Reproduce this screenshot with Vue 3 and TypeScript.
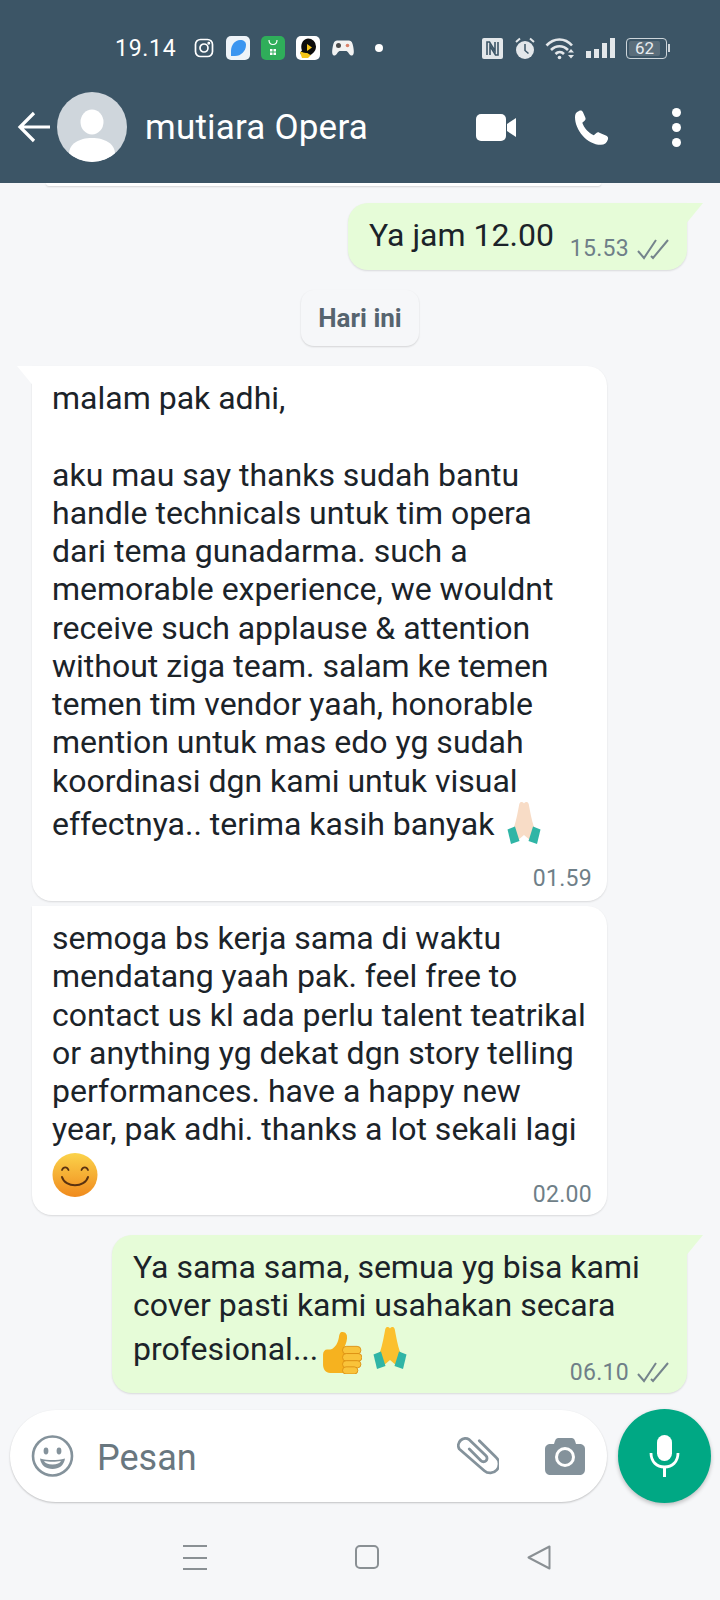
<script setup lang="ts">
const firstMessage = [
  'malam pak adhi,',
  '\u00a0',
  'aku mau say thanks sudah bantu',
  'handle technicals untuk tim opera',
  'dari tema gunadarma. such a',
  'memorable experience, we wouldnt',
  'receive such applause & attention',
  'without ziga team. salam ke temen',
  'temen tim vendor yaah, honorable',
  'mention untuk mas edo yg sudah',
  'koordinasi dgn kami untuk visual',
]
const secondMessage = [
  'semoga bs kerja sama di waktu',
  'mendatang yaah pak. feel free to',
  'contact us kl ada perlu talent teatrikal',
  'or anything yg dekat dgn story telling',
  'performances. have a happy new',
  'year, pak adhi. thanks a lot sekali lagi',
]
</script>

<template>
  <div class="phone">
    <svg width="0" height="0" class="defs">
      <defs>
        <symbol id="ticks" viewBox="0 0 32 22">
          <path d="M1 13l6 7L19 2M14 18l2 2L31 2" fill="none" stroke="currentColor" stroke-width="2" />
        </symbol>
        <symbol id="hands" viewBox="0 0 34 44">
          <g id="hand">
            <path d="M17 3.500C15.800 1.400 13 1.400 12.300 4 11 11 9.400 20 7.200 26.500L4 30l6 11 7-6z" fill="currentColor" />
            <path d="M.5 29.500l7.500-3 4.500 14.500L4 44z" fill="#2fb5a6" />
          </g>
          <use href="#hand" transform="matrix(-1 0 0 1 34 0)" />
        </symbol>
      </defs>
    </svg>

    <header class="top">
      <div class="status">
        <span class="clock">19.14</span>
        <svg class="st insta" width="20" height="20" viewBox="0 0 20 20" fill="none" stroke="#fff" stroke-width="1.700">
          <rect x="1.500" y="1.500" width="17" height="17" rx="5" />
          <circle cx="10" cy="10" r="4" />
          <circle cx="14.800" cy="5.200" r=".6" fill="#fff" />
        </svg>
        <svg class="st" width="24" height="24" viewBox="0 0 24 24">
          <rect width="24" height="24" rx="5" fill="#eef3f8" />
          <path d="M14 4c4 0 6 2 6 5 0 6-5 11-11 11H5v-5C5 9 9 4 14 4z" fill="#3b95f0" />
        </svg>
        <svg class="st" width="24" height="24" viewBox="0 0 24 24">
          <rect width="24" height="24" rx="5" fill="#2fae5a" />
          <path d="M8 4c0 6 8 6 8 0" fill="none" stroke="#fff" stroke-width="1.200" />
          <path d="M9 13h2.500v2.500H9zM12.500 13H15v2.500h-2.500zM9 16.500h2.500V19H9zM12.500 16.500H15V19h-2.500z" fill="#fff" />
        </svg>
        <svg class="st" width="24" height="24" viewBox="0 0 24 24">
          <rect width="24" height="24" rx="5" fill="#fff" />
          <path d="M12 2.500a8 8 0 0 1 8 8c0 5-4 8-7 9-2.500.8-4-1-6.500-.5C4 19 4 16 6 14.500 4 10 6 3 12 2.500z" fill="#0d0d0d" />
          <path d="M4 16c2-1 3 1 6 1s3 2 5 2l-3 3H6z" fill="#f5c518" />
          <path d="M11 8l5 3.500-5 3.500z" fill="#f5c518" />
        </svg>
        <svg class="st pad" width="24" height="20" viewBox="0 0 24 20">
          <path d="M6 2.500h12c2.500 0 3.500 2 4.200 6 .7 4 1.300 8-1 9-2.200.8-3.700-3.500-5.700-4.500H8.500C6.500 14 5 18.300 2.800 17.500c-2.300-1-1.700-5-1-9C2.500 4.500 3.500 2.500 6 2.500z" fill="#f2f2f2" />
          <circle cx="7.500" cy="7.500" r="2.500" fill="#4a4a4a" />
          <circle cx="16.500" cy="7.500" r="1.800" fill="#d9816a" />
        </svg>
        <span class="dot"></span>
        <span class="st-gap"></span>
        <svg class="st" width="21" height="21" viewBox="0 0 21 21">
          <rect width="21" height="21" rx="2" fill="#e3e7ea" />
          <path d="M5 17V4h2.500L13 13V4M16 4v13h-2.500L8 8v9" fill="none" stroke="#3c5566" stroke-width="1.600" />
        </svg>
        <svg class="st alarm" width="22" height="23" viewBox="0 0 22 23">
          <circle cx="11" cy="13" r="9" fill="#e3e7ea" />
          <path d="M11 7v6.500l3.500 3" fill="none" stroke="#3c5566" stroke-width="1.500" />
          <path d="M2 5l4-3.500M20 5l-4-3.500" stroke="#e3e7ea" stroke-width="2" />
        </svg>
        <svg class="st" width="30" height="23" viewBox="0 0 30 23" fill="none" stroke="#e3e7ea" stroke-width="2.600">
          <path d="M1.500 8.500C9 .5 20 .5 27 8.500M6 13c5-5 12-5 17 0M10.500 17c2.500-2.500 6-2.500 8.500 0" />
          <circle cx="14.500" cy="20.500" r="1.800" fill="#e3e7ea" stroke="none" />
          <path d="M23 15.500h6l-3-3.500zM23 18h6l-3 3.500z" fill="#e3e7ea" stroke="none" />
        </svg>
        <span class="signal">
          <i class="s1"></i><i class="s2"></i><i class="s3"></i><i class="s4"></i>
        </span>
        <span class="battery"><span class="level">62</span></span>
      </div>

      <div class="bar">
        <svg class="back" width="34" height="32" viewBox="0 0 34 32" fill="none" stroke="#fff" stroke-width="3.200">
          <path d="M33 16H3M17 2L3 16l14 14" />
        </svg>
        <span class="avatar">
          <svg width="70" height="70" viewBox="0 0 70 70">
            <ellipse cx="35" cy="30" rx="11.500" ry="12.500" fill="#fff" />
            <path d="M12 62c0-10 10-16 23-16s23 6 23 16c-6 5-14 8-23 8s-17-3-23-8z" fill="#fff" />
          </svg>
        </span>
        <span class="name">mutiara Opera</span>
        <svg class="video" width="40" height="27" viewBox="0 0 40 27">
          <rect width="30" height="27" rx="5" fill="#fff" />
          <path d="M31 10l9-6v19l-9-6z" fill="#fff" />
        </svg>
        <svg class="call" width="36" height="35" viewBox="0 0 36 35">
          <path d="M5 1c1.800-.8 3.200-.4 4 1.200l2.300 5.200c.6 1.500.2 2.600-1 3.600l-2 1.800c1.600 5 6 10 11.500 12.400l2.300-2c1-.9 2.100-1.100 3.300-.5l7 3c1.500.8 2 2 1.500 3.700-1 3.500-3.500 5.400-7 5.400C13 34.800 1 20 1 7c0-3 1-5 4-6z" fill="#fff" />
        </svg>
        <span class="more"><i></i><i></i><i></i></span>
      </div>
    </header>

    <main class="chat">
      <div class="sliver"></div>

      <div class="bubble out short">
        <span class="jam">Ya jam 12.00</span>
        <span class="meta">15.53<svg class="ticks" width="32" height="22"><use href="#ticks" /></svg></span>
      </div>

      <div class="day">Hari ini</div>

      <div class="bubble in first">
        <div v-for="(line, i) in firstMessage" :key="i" class="line">{{ line }}</div>
        <div class="line emoji-line">effectnya.. terima kasih banyak<svg class="hands light" width="34" height="44"><use href="#hands" /></svg></div>
        <div class="meta end">01.59</div>
      </div>

      <div class="bubble in second">
        <div v-for="(line, i) in secondMessage" :key="i" class="line">{{ line }}</div>
        <svg class="smile" width="46" height="44" viewBox="0 0 46 44">
          <defs>
            <linearGradient id="face" x1="0" y1="0" x2="0" y2="1">
              <stop offset="0" stop-color="#fbd34b" />
              <stop offset="1" stop-color="#f08a1d" />
            </linearGradient>
          </defs>
          <ellipse cx="23" cy="22" rx="22.500" ry="22" fill="url(#face)" />
          <path d="M10 17c1.500-3.500 5-3.500 6.500 0M29.500 17c1.500-3.500 5-3.500 6.500 0" fill="none" stroke="#5a3210" stroke-width="1.800" stroke-linecap="round" />
          <path d="M10 24c3 11 23 11 26 0" fill="none" stroke="#5a3210" stroke-width="2" stroke-linecap="round" />
        </svg>
        <div class="meta end up">02.00</div>
      </div>

      <div class="bubble out last">
        <div class="line">Ya sama sama, semua yg bisa kami</div>
        <div class="line">cover pasti kami usahakan secara</div>
        <div class="line emoji-line tight">
          profesional...<svg class="thumb" width="39" height="43" viewBox="0 0 38 42">
            <path d="M19 1c-2.500 0-3 2-3.500 5-.7 4-2 8-6 11-1 .8-2 1-3.500 1H4c-2.200 0-4 2-4 5v10c0 4 2.500 8 7 8h20V17c-1-.5-5-.5-6.500-.5 2-4 3.500-8.500 2.800-12C22.800 2 21 1 19 1z" fill="#f6b21f" />
            <rect x="19" y="15" width="18" height="7.500" rx="3.700" fill="#f9c33a" stroke="#d98a0f" stroke-width=".8" />
            <rect x="19" y="22" width="19" height="7.500" rx="3.700" fill="#f9c33a" stroke="#d98a0f" stroke-width=".8" />
            <rect x="19" y="29" width="18" height="7" rx="3.500" fill="#f9c33a" stroke="#d98a0f" stroke-width=".8" />
            <rect x="19" y="35" width="15" height="7" rx="3.500" fill="#f9c33a" stroke="#d98a0f" stroke-width=".8" />
          </svg><svg class="hands yellow" width="34" height="44"><use href="#hands" /></svg>
        </div>
        <div class="meta end up2">06.10<svg class="ticks" width="32" height="22"><use href="#ticks" /></svg></div>
      </div>
    </main>

    <div class="composer">
      <div class="input">
        <svg class="smiley" width="43" height="42" viewBox="0 0 43 42" fill="none" stroke="#84929b" stroke-width="2.600">
          <circle cx="21.500" cy="21" r="19.500" />
          <ellipse cx="15" cy="16" rx="2.400" ry="3.400" fill="#84929b" stroke="none" />
          <ellipse cx="28" cy="16" rx="2.400" ry="3.400" fill="#84929b" stroke="none" />
          <path d="M9 23.500c8 2 17 2 25 0-1 7-6 10.500-12.500 10.500S10 30.500 9 23.500z" fill="#84929b" stroke="none" />
          <path d="M13 26c5 1 12 1 17 0-1 2-4 3.500-8.500 3.500S14 28 13 26z" fill="#fff" stroke="none" />
        </svg>
        <span class="placeholder">Pesan</span>
        <svg class="clip" width="42" height="38" viewBox="0 0 42 38" fill="none" stroke="#84929b" stroke-width="2.800" stroke-linecap="round" stroke-linejoin="round">
          <path d="M22.300 3.700L39 20.300A8 8 0 0 1 27.300 33.700L2.300 12A7 7 0 0 1 12.300 2.700L29 18.700A3.500 3.500 0 0 1 24 23.700L12.300 12" />
        </svg>
        <svg class="cam" width="40" height="37" viewBox="0 0 40 37">
          <path d="M13 0h14c2 0 3 2 4 6h3c4 0 6 2 6 5v20c0 4-2 6-6 6H6c-4 0-6-2-6-6V11c0-3 2-5 6-5h3c1-4 2-6 4-6z" fill="#84929b" />
          <circle cx="20" cy="19" r="10" fill="#fff" />
          <circle cx="20" cy="19" r="7" fill="#84929b" />
        </svg>
      </div>
      <div class="mic">
        <svg width="31" height="42" viewBox="0 0 31 42">
          <rect x="8" y="0" width="15" height="26" rx="7.500" fill="#fff" />
          <path d="M2 18c0 9 6 14 13.500 14S29 27 29 18" fill="none" stroke="#fff" stroke-width="2.800" />
          <rect x="14" y="31" width="3" height="11" fill="#fff" />
        </svg>
      </div>
    </div>

    <nav class="nav">
      <span class="menu"><i></i><i></i><i></i></span>
      <span class="square"></span>
      <svg width="24" height="25" viewBox="0 0 24 25" fill="none" stroke="#8a9094" stroke-width="2" stroke-linejoin="round">
        <path d="M22.500 1.500v22L1.500 12.500z" />
      </svg>
    </nav>
  </div>
</template>

<style scoped>
.phone {
  width: 720px;
  height: 1600px;
  display: flex;
  flex-direction: column;
  overflow: hidden;
  background: #f6f7f9;
  font-family: Roboto, "Liberation Sans", sans-serif;
  color: #1b2329;
}
.defs {
  position: absolute;
}

.top {
  height: 183px;
  flex: none;
  background: #3c5566;
  color: #fff;
  display: flex;
  flex-direction: column;
  position: relative;
  z-index: 1;
}
.status {
  display: flex;
  align-items: center;
  height: 24px;
  margin-top: 36px;
  padding-left: 115px;
}
.clock {
  font-size: 23px;
  letter-spacing: 0.7px;
  width: 79px;
}
.st {
  flex: none;
  margin-right: 11px;
}
.insta {
  margin-right: 12px;
}
.alarm {
  margin-right: 9px;
}
.pad {
  margin-right: 20px;
}
.dot {
  width: 8px;
  height: 8px;
  border-radius: 50%;
  background: #fff;
}
.st-gap {
  width: 99px;
}
.signal {
  display: flex;
  align-items: flex-end;
  gap: 3px;
  height: 20px;
  margin-right: 11px;
}
.signal i {
  width: 5px;
  background: #e3e7ea;
}
.s1 { height: 7px; }
.s2 { height: 9px; }
.s3 { height: 15px; }
.s4 { height: 20px; }
.battery {
  width: 41px;
  height: 21px;
  border: 1.500px solid #cdd5da;
  border-radius: 4px;
  display: flex;
  padding: 2px;
  box-sizing: border-box;
  position: relative;
}
.battery::after {
  content: "";
  position: absolute;
  right: -4px;
  top: 5px;
  width: 2px;
  height: 8px;
  background: #cdd5da;
}
.level {
  flex: 0 0 31px;
  background: #5a6d7a;
  border-radius: 2px;
  font-size: 17px;
  line-height: 15px;
  text-align: center;
  color: #e8ecef;
}
.bar {
  display: flex;
  align-items: center;
  margin-top: 32px;
  height: 70px;
  padding-left: 17px;
}
.back {
  margin-right: 6px;
}
.avatar {
  width: 70px;
  height: 70px;
  border-radius: 50%;
  background: #cfd6dc;
  overflow: hidden;
  flex: none;
}
.name {
  margin-left: 18px;
  font-size: 35px;
  width: 331px;
  letter-spacing: 0.2px;
  white-space: nowrap;
}
.call {
  margin-left: 58px;
}
.more {
  display: flex;
  flex-direction: column;
  gap: 6px;
  margin-left: 62px;
}
.more i {
  width: 9px;
  height: 9px;
  border-radius: 50%;
  background: #fff;
}

.chat {
  flex: 1;
  min-height: 0;
  display: flex;
  flex-direction: column;
  font-size: 32px;
}
.sliver {
  width: 555px;
  height: 3px;
  margin-left: 46px;
  background: #fff;
  border-radius: 0 0 14px 14px;
  box-shadow: 0 1px 2px rgba(0, 0, 0, 0.14);
}
.bubble {
  box-sizing: border-box;
  position: relative;
  box-shadow: 0 1px 2px rgba(0, 0, 0, 0.12);
}
.bubble::before {
  content: "";
  position: absolute;
  top: 0;
  width: 18px;
  height: 22px;
}
.in {
  background: #fff;
  margin-left: 32px;
  width: 575px;
  border-radius: 0 20px 20px 20px;
  padding: 13px 15px 0 20px;
}
.in.first::before {
  left: -15px;
  background: #fff;
  clip-path: polygon(0 0, 100% 0, 100% 100%);
}
.out {
  background: #e6fcd8;
  align-self: flex-start;
  margin-left: 112px;
  border-radius: 20px 0 20px 20px;
}
.out::before {
  right: -16px;
  background: #e6fcd8;
  clip-path: polygon(0 0, 100% 0, 0 100%);
}
.line {
  line-height: 38.250px;
  white-space: nowrap;
}
.short {
  margin-left: 348px;
  margin-top: 17px;
  width: 339px;
  height: 67px;
  padding: 13px 18px 0 21px;
  display: flex;
  justify-content: space-between;
}
.jam {
  line-height: 38px;
}
.meta {
  font-size: 23px;
  color: #6f7f88;
  display: flex;
  align-items: center;
  letter-spacing: 0.3px;
  line-height: 27px;
}
.short .meta {
  align-self: flex-end;
  margin-bottom: 8px;
}
.ticks {
  color: #75848c;
  margin-left: 8px;
}
.end {
  justify-content: flex-end;
}
.day {
  align-self: center;
  margin-top: 20px;
  margin-bottom: 20px;
  height: 56px;
  line-height: 56px;
  padding: 0 17px;
  border-radius: 13px;
  background: #f6f7f9;
  box-shadow: 0 1px 2px rgba(0, 0, 0, 0.14);
  font-size: 26px;
  font-weight: 700;
  color: #56646f;
}
.first {
  height: 535px;
}
.emoji-line {
  display: flex;
  align-items: flex-end;
  height: 46px;
  line-height: 44px;
  margin-top: 0;
}
.hands {
  margin-left: 13px;
  margin-bottom: 2px;
}
.light {
  color: #f8dcc6;
}
.yellow {
  color: #fbc02d;
}
.first .meta {
  margin-top: 19px;
}
.second {
  margin-top: 5px;
  height: 309px;
}
.smile {
  display: block;
  margin-top: 4px;
}
.up {
  margin-top: -16px;
}
.last {
  margin-top: 20px;
  width: 575px;
  height: 158px;
  padding: 13px 18px 0 21px;
}
.tight {
  margin-top: 0;
}
.thumb {
  margin-left: 5px;
  margin-bottom: -3px;
}
.yellow {
  margin-left: 11px;
}
.up2 {
  margin-top: -12px;
}

.composer {
  flex: none;
  display: flex;
  align-items: center;
  gap: 11px;
  padding: 0 9px 0 10px;
  height: 94px;
  margin-top: 15px;
}
.input {
  flex: 1;
  height: 92px;
  background: #fff;
  border-radius: 46px;
  box-shadow: 0 1px 2px rgba(0, 0, 0, 0.22);
  display: flex;
  align-items: center;
  padding-left: 21px;
}
.smiley {
  flex: none;
}
.placeholder {
  font-size: 36px;
  color: #69777f;
  margin-left: 23px;
  padding-top: 4px;
  width: 360px;
  flex: none;
}
.clip {
  flex: none;
  margin-right: 46px;
}
.cam {
  flex: none;
}
.mic {
  width: 93px;
  height: 94px;
  flex: none;
  border-radius: 50%;
  background: #00a884;
  box-shadow: 0 2px 4px rgba(0, 0, 0, 0.24);
  display: flex;
  align-items: center;
  justify-content: center;
}
.nav {
  flex: none;
  height: 97px;
  display: flex;
  justify-content: center;
  gap: 148px;
  padding-top: 42px;
  padding-left: 13px;
  box-sizing: border-box;
  align-items: flex-start;
}
.menu {
  width: 24px;
  height: 25px;
  display: flex;
  flex-direction: column;
  justify-content: space-between;
}
.menu i {
  height: 2px;
  background: #8a9094;
}
.square {
  width: 24px;
  height: 24px;
  box-sizing: border-box;
  border: 2px solid #8a9094;
  border-radius: 5px;
}
</style>
